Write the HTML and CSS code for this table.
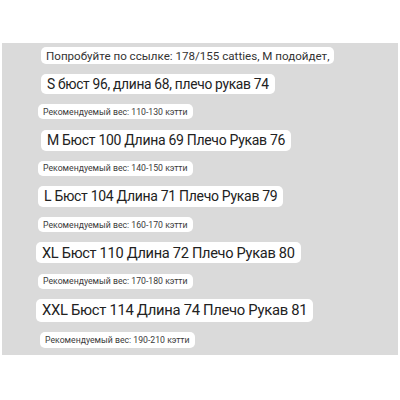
FILE: index.html
```
<!DOCTYPE html>
<html lang="ru">
<head>
<meta charset="utf-8">
<link rel="stylesheet" href="styles.css">
</head>
<body>
<div class="panel">
  <div class="bubble intro">Попробуйте по ссылке: 178/155 catties, M подойдет,</div>
  <div class="bubble big s">S бюст 96, длина 68, плечо рукав 74</div>
  <div class="bubble rec">Рекомендуемый вес: 110-130 кэтти</div>
  <div class="bubble big m">M Бюст 100 Длина 69 Плечо Рукав 76</div>
  <div class="bubble rec">Рекомендуемый вес: 140-150 кэтти</div>
  <div class="bubble big l">L Бюст 104 Длина 71 Плечо Рукав 79</div>
  <div class="bubble rec">Рекомендуемый вес: 160-170 кэтти</div>
  <div class="bubble big xl">XL Бюст 110 Длина 72 Плечо Рукав 80</div>
  <div class="bubble rec">Рекомендуемый вес: 170-180 кэтти</div>
  <div class="bubble big xxl">XXL Бюст 114 Длина 74 Плечо Рукав 81</div>
  <div class="bubble rec last">Рекомендуемый вес: 190-210 кэтти</div>
</div>
</body>
</html>
```
FILE: styles.css
```
html, body {
  margin: 0;
  padding: 0;
  background: #ffffff;
}
body {
  font-family: Roboto, "Noto Sans", sans-serif;
}
.panel {
  margin: 43px 2px 0 2px;
  height: 312px;
  box-sizing: border-box;
  background: #dadada;
  padding: 4px 0 0 34px;
  display: flex;
  flex-direction: column;
  align-items: flex-start;
  gap: 10.2px;
}
.bubble {
  background: #ffffff;
  border-radius: 5px;
  white-space: nowrap;
  box-sizing: border-box;
  display: flex;
  align-items: center;
}
.intro {
  height: 17px;
  margin-left: 5px;
  padding: 0 5px;
  font-size: 11.6px;
  color: #333333;
}
.big {
  height: 21px;
  padding: 0 6px;
  font-size: 14px;
  letter-spacing: -0.3px;
  color: #222222;
}
.s { margin-left: 5px; font-size: 13.8px; height: 20px; }
.m { margin-left: 5px; }
.l { margin-left: 2px; }
.xl { margin-left: 0; font-size: 14.6px; }
.xxl { margin-left: 0; font-size: 14.8px; height: 23px; }
.rec {
  height: 15px;
  margin-left: 2px;
  padding: 0 5px;
  font-size: 8.7px;
  color: #3a3a3a;
}
.last { margin-left: 4px; height: 16px; }
```
